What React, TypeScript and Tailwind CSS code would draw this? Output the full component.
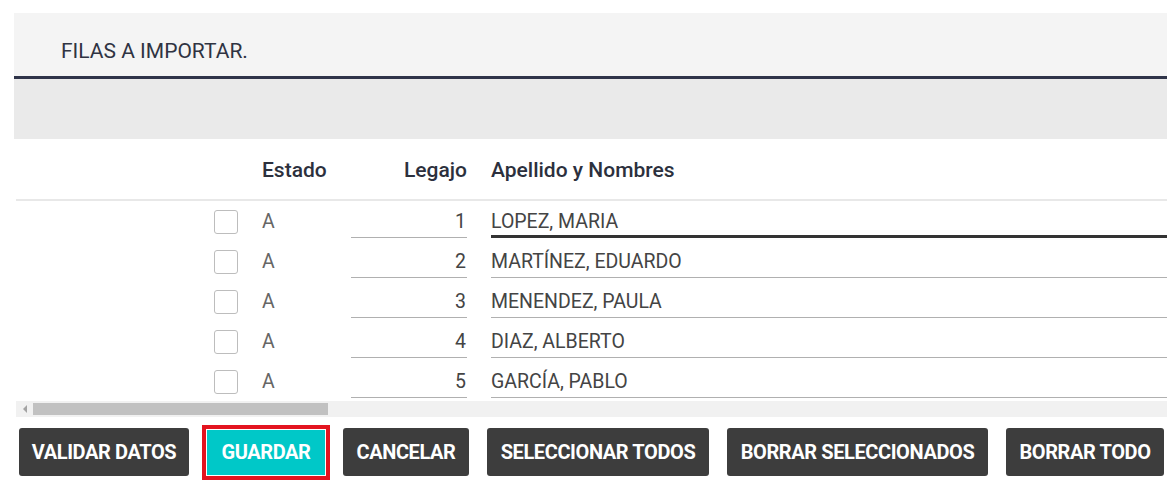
import { useState } from "react";

const rows = [
  { estado: "A", legajo: "1", nombre: "LOPEZ, MARIA" },
  { estado: "A", legajo: "2", nombre: "MARTÍNEZ, EDUARDO" },
  { estado: "A", legajo: "3", nombre: "MENENDEZ, PAULA" },
  { estado: "A", legajo: "4", nombre: "DIAZ, ALBERTO" },
  { estado: "A", legajo: "5", nombre: "GARCÍA, PABLO" },
];

const ImportRows = () => {
  const [checked, setChecked] = useState<boolean[]>(rows.map(() => false));

  const toggle = (i: number) => {
    setChecked(prev => prev.map((c, idx) => (idx === i ? !c : c)));
  };

  return (
    <div className="w-[1167px] h-[490px] bg-white overflow-hidden font-['Roboto',sans-serif]">
      {/* Title band */}
      <div className="pt-[13px] pl-[14px]">
        <div className="h-[63px] bg-[#f4f4f4] flex items-center pt-[14px] pl-[47px] text-[21px] text-[#2f3342]">
          FILAS A IMPORTAR.
        </div>
        <div className="h-[3px] bg-[#2f3449]" />
        <div className="h-[60px] bg-[#eaeaea]" />
      </div>

      {/* Table */}
      <div className="pl-[16px]">
        <div className="flex items-center h-[62px] pt-[3px] border-b-2 border-[#e8e8e8] text-[21px] font-medium text-[#2c303d]">
          <div className="w-[246px]" />
          <div className="w-[89px]">Estado</div>
          <div className="w-[116px] text-right">Legajo</div>
          <div className="w-[24px]" />
          <div className="flex-1">Apellido y Nombres</div>
        </div>

        {rows.map((row, i) => (
          <div key={i} className="flex items-start h-[40px] text-[19.5px] text-[#444]">
            <div className="w-[246px] flex justify-end pr-[24px] pt-[9px]">
              <button
                onClick={() => toggle(i)}
                className={`w-[24px] h-[24px] rounded-[3px] border border-[#bdbdbd] ${checked[i] ? "bg-[#00c8c8]" : "bg-white"}`}
              />
            </div>
            <div className="w-[89px] pt-[6px] text-[#666]">{row.estado}</div>
            <div className="w-[116px] h-[37px] pt-[6px] text-right pr-[1px] border-b border-[#b0b0b0]">
              {row.legajo}
            </div>
            <div className="w-[24px]" />
            <div
              className={`flex-1 h-[37px] pt-[6px] ${i === 0 ? "border-b-[3px] border-[#333]" : "border-b border-[#b0b0b0]"}`}
            >
              {row.nombre}
            </div>
          </div>
        ))}

        {/* Horizontal scrollbar */}
        <div className="h-[16px] bg-[#f1f1f1] flex items-center">
          <div className="w-[17px] flex justify-center">
            <div className="w-0 h-0 border-y-[4px] border-y-transparent border-r-[4px] border-r-[#a3a3a3]" />
          </div>
          <div className="w-[295px] h-[12px] bg-[#c1c1c1]" />
        </div>
      </div>

      {/* Actions */}
      <div className="flex items-center gap-[18px] pl-[19px] mt-[11px] text-[20px] font-bold text-white tracking-[-0.4px]">
        <button className="w-[170px] h-[48px] rounded-[3px] bg-[#3d3d3d]">VALIDAR DATOS</button>
        <button className="w-[118px] h-[45px] bg-[#00c8c8] outline-[4px] outline-solid outline-[#e3141f] outline-offset-[1px]">
          GUARDAR
        </button>
        <button className="w-[126px] h-[48px] rounded-[3px] bg-[#3d3d3d]">CANCELAR</button>
        <button className="w-[222px] h-[48px] rounded-[3px] bg-[#3d3d3d]">SELECCIONAR TODOS</button>
        <button className="w-[261px] h-[48px] rounded-[3px] bg-[#3d3d3d]">BORRAR SELECCIONADOS</button>
        <button className="w-[158px] h-[48px] rounded-[3px] bg-[#3d3d3d]">BORRAR TODO</button>
      </div>
    </div>
  );
};

export default function App() {
  return <ImportRows />;
}
